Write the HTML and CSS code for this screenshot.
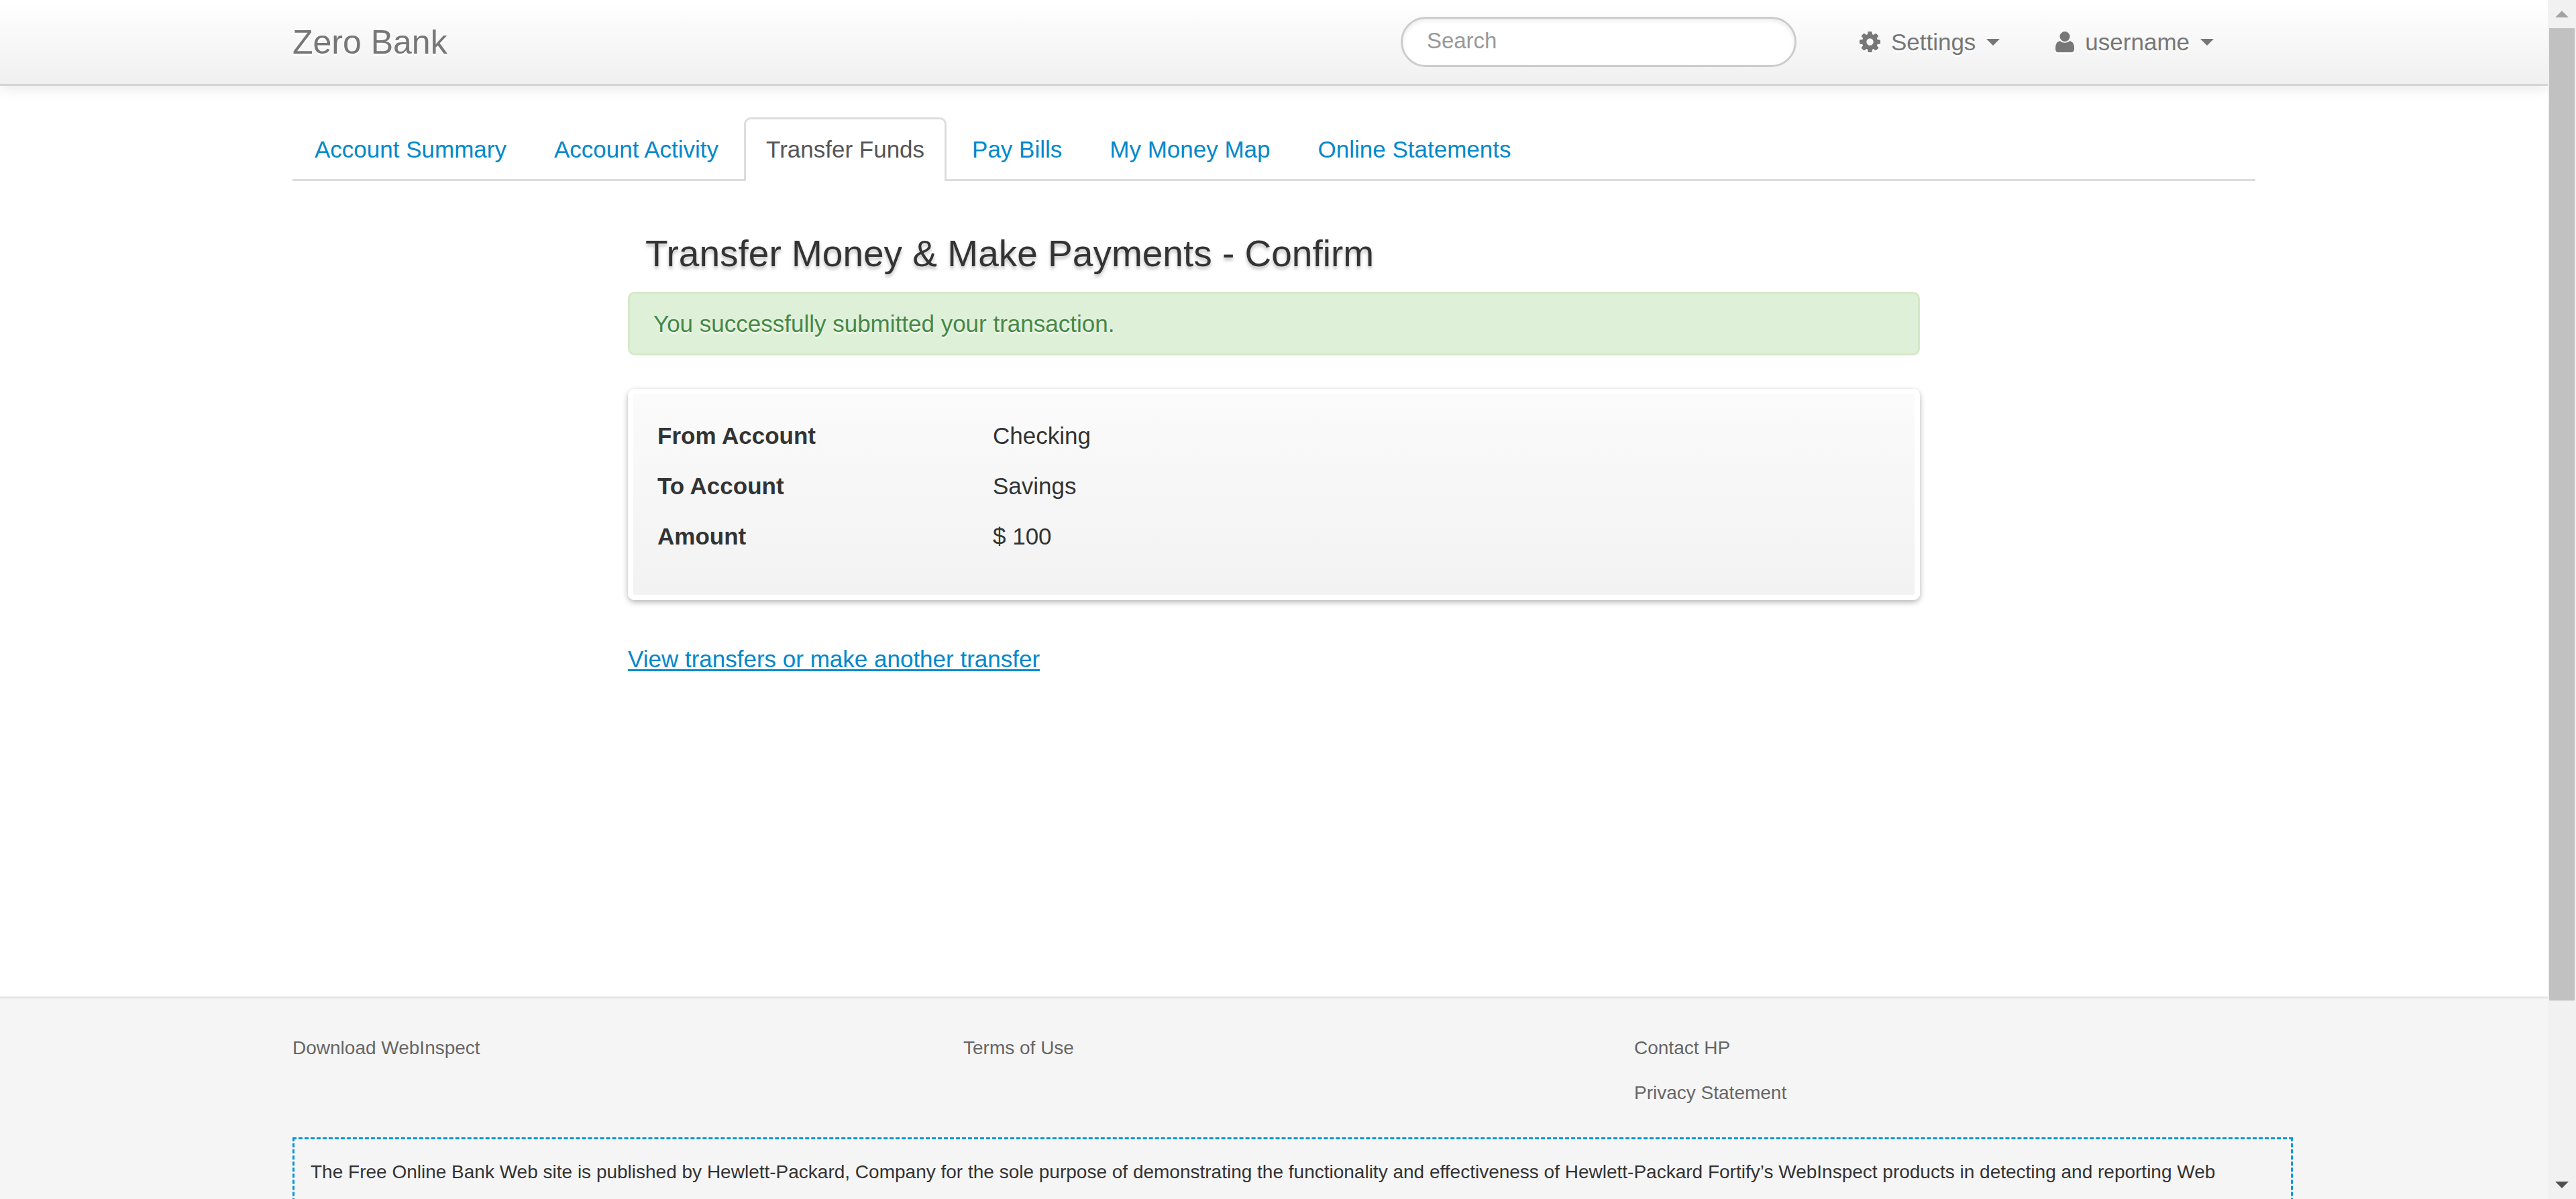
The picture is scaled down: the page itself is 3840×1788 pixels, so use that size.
FILE: index.html
```html
<!DOCTYPE html>
<html lang="en">
<head>
<meta charset="utf-8">
<meta name="viewport" content="width=device-width, initial-scale=1">
<title>Zero - Transfer Money &amp; Make Payments - Confirm</title>
<link rel="stylesheet" href="styles.css">
</head>
<body class="window">
<div class="page">
  <header class="navbar">
    <div class="container navbar-inner">
      <a class="brand" href="#">Zero Bank</a>
      <form class="search" role="search">
        <input class="search-input" type="text" placeholder="Search" aria-label="Search">
      </form>
      <div class="user-menu">
        <button class="menu-button" type="button">
          <svg class="icon-cog" viewBox="128 128 1536 1536" aria-hidden="true"><path d="M1152 896q0-106-75-181t-181-75-181 75-75 181 75 181 181 75 181-75 75-181zm512-109v222q0 12-8 23t-20 13l-185 28q-19 54-39 91 35 50 107 138 10 12 10 25t-9 23q-27 37-99 108t-94 71q-12 0-26-9l-138-108q-44 23-91 38-16 136-29 186-7 28-36 28h-222q-14 0-24.500-8.500t-11.500-21.500l-28-184q-49-16-90-37l-141 107q-10 9-25 9-14 0-25-11-126-114-165-168-7-10-7-23 0-12 8-23 15-21 51-66.500t54-70.500q-27-50-41-99l-183-27q-13-2-21-12.500t-8-23.500v-222q0-12 8-23t19-13l186-28q14-46 39-92-40-57-107-138-10-12-10-24 0-10 9-23 26-36 98.500-107.500t94.500-71.500q13 0 26 10l138 107q44-23 91-38 16-136 29-186 7-28 36-28h222q14 0 24.500 8.500t11.500 21.500l28 184q49 16 90 37l142-107q9-9 24-9 13 0 25 10 129 119 165 170 7 8 7 22 0 12-8 23-15 21-51 66.500t-54 70.500q26 50 41 98l183 28q13 2 21 12.500t8 23.500z"/></svg>
          <span>Settings</span>
          <span class="caret"></span>
        </button>
        <button class="menu-button" type="button">
          <svg class="icon-user" viewBox="256 128 1280 1536" preserveAspectRatio="none" aria-hidden="true"><path d="M1536 1399q0 265-213 265h-854q-213 0-213-265 0-85 8.500-160.500t31.500-152 58.500-131 94-89 134.500-34.500q131 128 313 128t313-128q76 0 134.500 34.500t94 89 58.500 131 31.500 152 8.500 160.500zM1240 500q0 155-100 263t-244 108-244-108-100-263 100-263 244-109 244 109 100 263z"/></svg>
          <span>username</span>
          <span class="caret"></span>
        </button>
      </div>
    </div>
  </header>

  <main class="container content">
    <nav class="tabs">
      <a class="tab" href="#">Account Summary</a>
      <a class="tab" href="#">Account Activity</a>
      <a class="tab tab-active" href="#" aria-current="page">Transfer Funds</a>
      <a class="tab" href="#">Pay Bills</a>
      <a class="tab" href="#">My Money Map</a>
      <a class="tab" href="#">Online Statements</a>
    </nav>

    <section class="board">
      <h1 class="board-title">Transfer Money &amp; Make Payments - Confirm</h1>
      <p class="alert">You successfully submitted your transaction.</p>
      <dl class="details">
        <dt>From Account</dt><dd>Checking</dd>
        <dt>To Account</dt><dd>Savings</dd>
        <dt>Amount</dt><dd>$ 100</dd>
      </dl>
      <a class="board-link" href="#">View transfers or make another transfer</a>
    </section>
  </main>

  <footer class="footer">
    <div class="container">
      <div class="footer-links">
        <ul><li><a href="#">Download WebInspect</a></li></ul>
        <ul><li><a href="#">Terms of Use</a></li></ul>
        <ul>
          <li><a href="#">Contact HP</a></li>
          <li><a href="#">Privacy Statement</a></li>
        </ul>
      </div>
      <p class="disclaimer">The Free Online Bank Web site is published by Hewlett-Packard, Company for the sole purpose of demonstrating the functionality and effectiveness of Hewlett-Packard Fortify’s WebInspect products in detecting and reporting Web</p>
    </div>
  </footer>
</div>

<div class="scrollbar" aria-hidden="true">
  <div class="scroll-cap"><span class="arrow-up"></span></div>
  <div class="scroll-thumb"></div>
  <div class="scroll-track"></div>
  <div class="scroll-cap"><span class="arrow-down"></span></div>
</div>
</body>
</html>
```

FILE: styles.css
```css
* { box-sizing: border-box; }

.window {
  display: flex;
  height: 100vh;
  margin: 0;
  overflow: hidden;
  background: #fff;
  color: #333;
  font: 35px/50px "Liberation Sans", Arial, sans-serif;
}

.page {
  flex: 1;
  min-width: 0;
  overflow: hidden;
}

.container {
  width: 100%;
  max-width: 2926px;
  margin: 0 auto;
}

/* Top bar */
.navbar {
  border-bottom: 3px solid #d4d4d4;
  background: linear-gradient(#fff, #f0f0f0);
  box-shadow: 0 3px 20px rgba(0, 0, 0, 0.1);
}

.navbar-inner {
  display: flex;
  align-items: center;
  height: 125px;
  padding-right: 24px;
  text-shadow: 0 3px 0 #fff;
}

.brand {
  flex: 1;
  color: #777;
  font-size: 50px;
  text-decoration: none;
}

.search { margin: 0 94px 0 0; }

.search-input {
  display: block;
  width: 590px;
  height: 75px;
  padding: 0 36px 3px;
  border: 3px solid #ccc;
  border-radius: 38px;
  background: #fff;
  box-shadow: inset 0 3px 6px rgba(0, 0, 0, 0.08);
  color: #555;
  font-family: inherit;
  font-size: 33px;
}

.search-input::placeholder {
  color: #999;
  opacity: 1;
}

.user-menu {
  display: flex;
  gap: 83px;
  padding-right: 38px;
}

.menu-button {
  display: flex;
  align-items: center;
  gap: 16px;
  padding: 0;
  border: 0;
  background: none;
  color: #777;
  font: inherit;
  text-shadow: inherit;
}

.icon-cog,
.icon-user {
  height: 31px;
  fill: #777;
  filter: drop-shadow(0 3px 0 #fff);
}

.icon-cog { width: 31px; }
.icon-user { width: 28px; }

.caret {
  border: 10px solid transparent;
  border-top-color: #777;
  border-bottom: 0;
}

/* Tabs */
.content { min-height: 1358px; }

.tabs {
  display: flex;
  gap: 5px;
  padding-top: 47px;
  box-shadow: inset 0 -3px #ddd;
}

.tab {
  padding: 20px 30px 22px;
  border: 3px solid transparent;
  border-bottom: 0;
  border-radius: 10px 10px 0 0;
  color: #08c;
  text-decoration: none;
}

.tab-active {
  border-color: #ddd;
  background: #fff;
  color: #555;
}

/* Transfer confirmation */
.board { padding: 60px 500px 0; }

.board-title {
  margin: 0 0 9px;
  padding-left: 26px;
  font-size: 55px;
  font-weight: 400;
  line-height: 96px;
  text-shadow: 0 4px 5px rgba(0, 0, 0, 0.25);
}

.alert {
  margin: 0 0 50px;
  padding: 20px 35px 19px;
  border: 3px solid #d6e9c6;
  border-radius: 10px;
  background: #dff0d8;
  color: #468847;
  text-shadow: 0 3px 0 rgba(255, 255, 255, 0.5);
}

.details {
  display: grid;
  grid-template-columns: 500px 1fr;
  row-gap: 25px;
  margin: 0 0 63px;
  padding: 45px 44px 70px;
  border-radius: 10px;
  background: linear-gradient(#fbfbfb, #f2f2f2);
  box-shadow: 0 3px 8px rgba(0, 0, 0, 0.3), inset 0 0 0 8px #fff;
}

.details dt { font-weight: 700; }
.details dd { margin: 0; }

.board-link {
  color: #08c;
  text-decoration-thickness: 3px;
  text-underline-offset: 3px;
}

/* Footer */
.footer {
  padding: 49px 0 80px;
  border-top: 3px solid #e5e5e5;
  background: #f5f5f5;
  font-size: 28px;
}

.footer-links {
  display: grid;
  grid-template-columns: 1000px 1000px 1fr;
  margin-bottom: 41px;
}

.footer-links ul {
  display: grid;
  align-content: start;
  gap: 17px;
  margin: 0;
  padding: 0;
  list-style: none;
}

.footer-links a {
  color: #666;
  text-decoration: none;
}

.disclaimer {
  margin: 0 -56px 0 0;
  padding: 24px 24px 80px;
  border: 3px dashed #0096d6;
}

/* Window scrollbar */
.scrollbar {
  display: flex;
  flex-direction: column;
  width: 42px;
  padding: 0 2px;
  background: #f1f1f1;
}

.scroll-cap {
  display: grid;
  place-items: center;
  height: 42px;
}

.scroll-thumb {
  flex: 1450;
  background: #c1c1c1;
}

.scroll-track { flex: 254; }

.arrow-up,
.arrow-down {
  border: 10px solid transparent;
}

.arrow-up {
  border-top: 0;
  border-bottom-color: #a3a3a3;
}

.arrow-down {
  border-top-color: #505050;
  border-bottom: 0;
}
```
